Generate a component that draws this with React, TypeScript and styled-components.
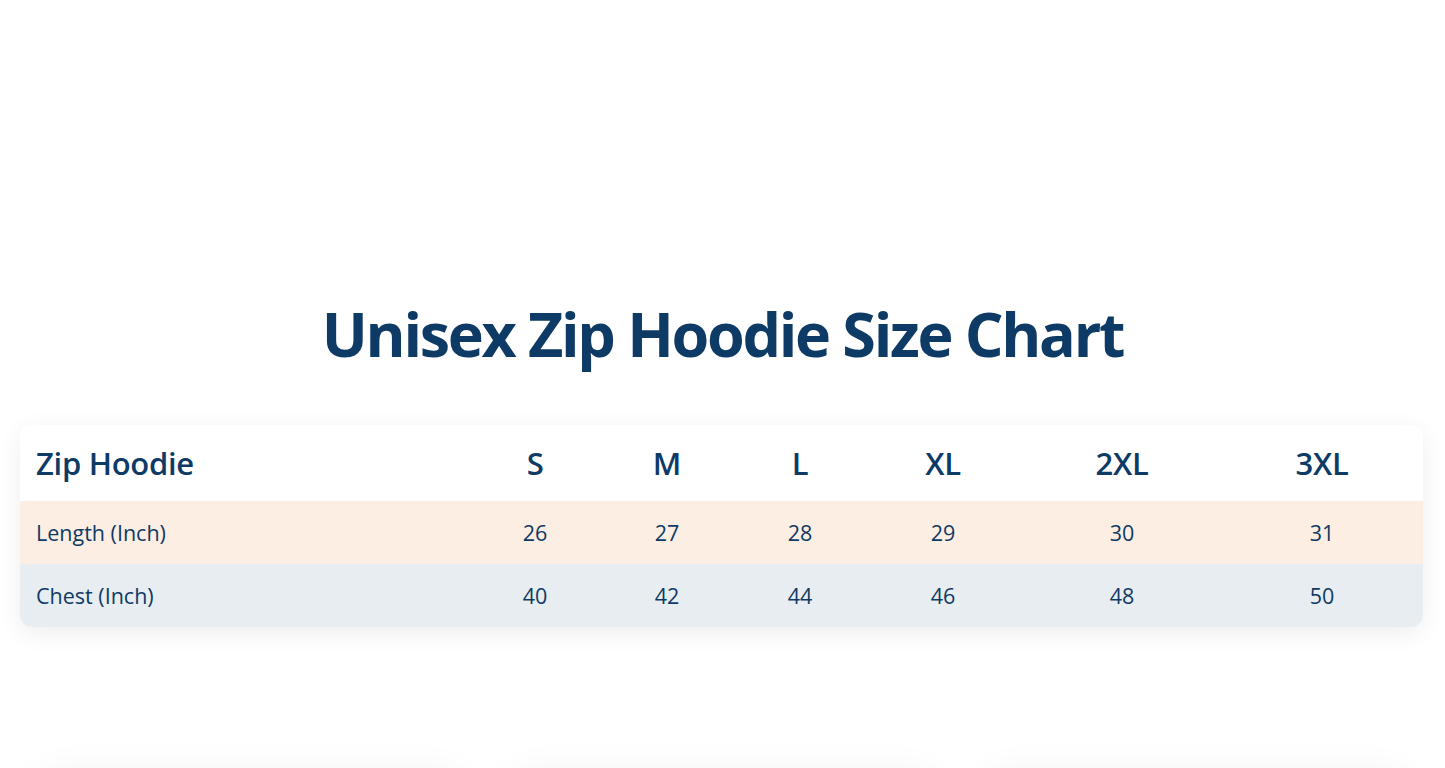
import React from "react";
import styled, { createGlobalStyle } from "styled-components";

const GlobalStyle = createGlobalStyle`
  body {
    margin: 0;
    background: #ffffff;
    font-family: "Open Sans", "Noto Sans", Arial, sans-serif;
    color: #0e3a66;
  }
`;

const Page = styled.main`
  padding-top: 292px;
  overflow: hidden;
`;

const Title = styled.h1`
  margin: 0;
  text-align: center;
  font-size: 61px;
  line-height: 84px;
  font-weight: 700;
  letter-spacing: -2.3px;
  color: #0e3a66;
`;

const ChartCard = styled.div`
  margin: 49px 22px 0 20px;
  border-radius: 12px;
  overflow: hidden;
  background: #ffffff;
  box-shadow: 0 6px 24px rgba(0, 0, 0, 0.07);
`;

const Table = styled.table`
  width: 100%;
  border-collapse: collapse;
  table-layout: fixed;
`;

const Row = styled.tr<{ $bg: string }>`
  background: ${(p) => p.$bg};
`;

const HeadCell = styled.th<{ $left?: boolean }>`
  height: 76px;
  padding: 0 ${(p) => (p.$left ? "16px" : "0")};
  text-align: ${(p) => (p.$left ? "left" : "center")};
  font-size: 31px;
  font-weight: 600;
  letter-spacing: -0.3px;
  color: #0e3a66;
`;

const Cell = styled.td<{ $left?: boolean }>`
  height: 63px;
  padding: 0 ${(p) => (p.$left ? "16px" : "0")};
  text-align: ${(p) => (p.$left ? "left" : "center")};
  font-size: 21.5px;
  font-weight: 400;
  color: #0e3a66;
`;

const CardRow = styled.div`
  display: grid;
  grid-template-columns: repeat(3, 1fr);
  gap: 52px;
  padding: 0 40px 60px;
  margin-top: 148px;
`;

const InfoCard = styled.div`
  height: 260px;
  border-radius: 16px;
  background: #ffffff;
  box-shadow: 0 0 40px rgba(0, 0, 0, 0.06);
`;

const widths = [453, 124, 140, 126, 160, 198, 202];
const sizes = ["S", "M", "L", "XL", "2XL", "3XL"];
const rows = [
  { label: "Length (Inch)", values: [26, 27, 28, 29, 30, 31], bg: "#fdeee3" },
  { label: "Chest (Inch)", values: [40, 42, 44, 46, 48, 50], bg: "#e8edf1" },
];

export default function App() {
  return (
    <>
      <GlobalStyle />
      <Page>
        <Title>Unisex Zip Hoodie Size Chart</Title>
        <ChartCard>
          <Table>
            <colgroup>
              {widths.map((w, i) => (
                <col key={i} style={{ width: w }} />
              ))}
            </colgroup>
            <thead>
              <Row $bg="#ffffff">
                <HeadCell $left>Zip Hoodie</HeadCell>
                {sizes.map((s) => (
                  <HeadCell key={s}>{s}</HeadCell>
                ))}
              </Row>
            </thead>
            <tbody>
              {rows.map((r) => (
                <Row key={r.label} $bg={r.bg}>
                  <Cell $left>{r.label}</Cell>
                  {r.values.map((v) => (
                    <Cell key={v}>{v}</Cell>
                  ))}
                </Row>
              ))}
            </tbody>
          </Table>
        </ChartCard>
        <CardRow>
          <InfoCard />
          <InfoCard />
          <InfoCard />
        </CardRow>
      </Page>
    </>
  );
}
